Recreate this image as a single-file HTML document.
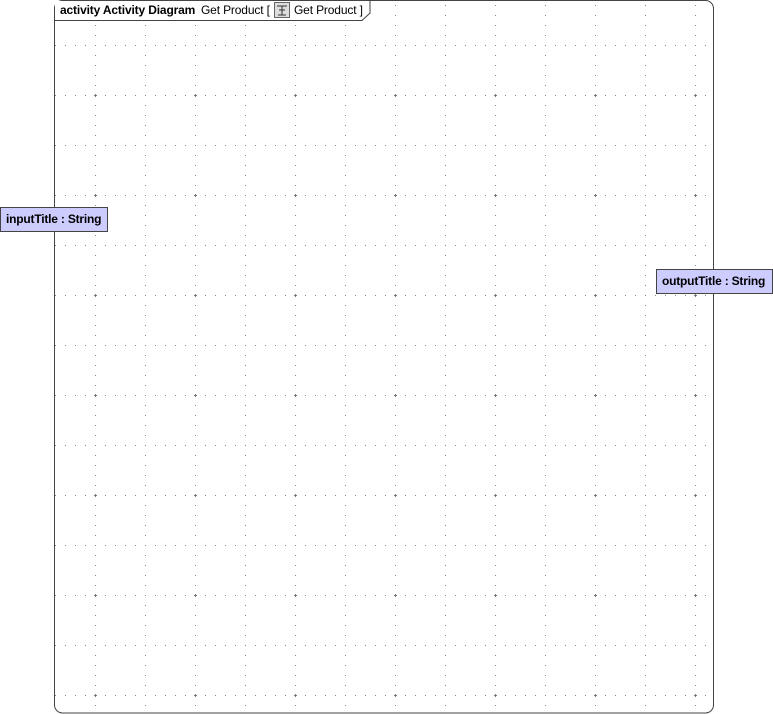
<!DOCTYPE html>
<html><head><style>
body{margin:0;width:773px;height:714px;background:#fff;overflow:hidden;position:relative;font-family:"Liberation Sans",Arial,sans-serif}
.pin{position:absolute;background:#ccccff;border:1px solid #444;font-size:12px;font-weight:bold;color:#000;line-height:22px;box-sizing:border-box;padding-left:5px;letter-spacing:-0.2px}
.t{position:absolute;top:3px;font-size:12px;white-space:nowrap;letter-spacing:-0.15px}
</style></head><body>
<svg width="773" height="714" style="position:absolute;left:0;top:0">
<defs>
<pattern id="h" patternUnits="userSpaceOnUse" x="0" y="0" width="10" height="50"><rect x="5" y="45" width="1" height="1" fill="#888"/></pattern>
<pattern id="v" patternUnits="userSpaceOnUse" x="0" y="0" width="50" height="10"><rect x="45" y="5" width="1" height="1" fill="#888"/></pattern>
<pattern id="p" patternUnits="userSpaceOnUse" x="0" y="0" width="100" height="100"><rect x="94" y="95" width="3" height="1" fill="#777"/><rect x="95" y="94" width="1" height="3" fill="#777"/></pattern>
</defs>
<rect x="55" y="20" width="658" height="692" fill="url(#h)"/>
<rect x="55" y="20" width="658" height="692" fill="url(#v)"/>
<rect x="55" y="20" width="658" height="692" fill="url(#p)"/>
<rect x="55" y="0" width="658" height="20" fill="url(#v)"/>
<rect x="54.5" y="0.5" width="659" height="712.5" rx="8" fill="none" stroke="#444" stroke-width="1"/>
<rect x="55" y="1" width="314" height="19" fill="#fff"/>
<path d="M54.5 20.5 H362 L370 13 V0.5" fill="none" stroke="#444"/>
<rect x="274.5" y="2.5" width="15" height="15" fill="#ddd" stroke="#666"/>
<path d="M277 6h10M282 6v9M279 10h6M278 15h8" stroke="#333" fill="none"/>
</svg>
<div class="t" style="left:60px"><b>activity Activity Diagram</b></div>
<div class="t" style="left:201px">Get Product [</div>
<div class="t" style="left:294px">Get Product ]</div>
<div class="pin" style="left:0;top:207px;width:108px;height:25px">inputTitle : String</div>
<div class="pin" style="left:656px;top:269px;width:117px;height:25px">outputTitle : String</div>
</body></html>
